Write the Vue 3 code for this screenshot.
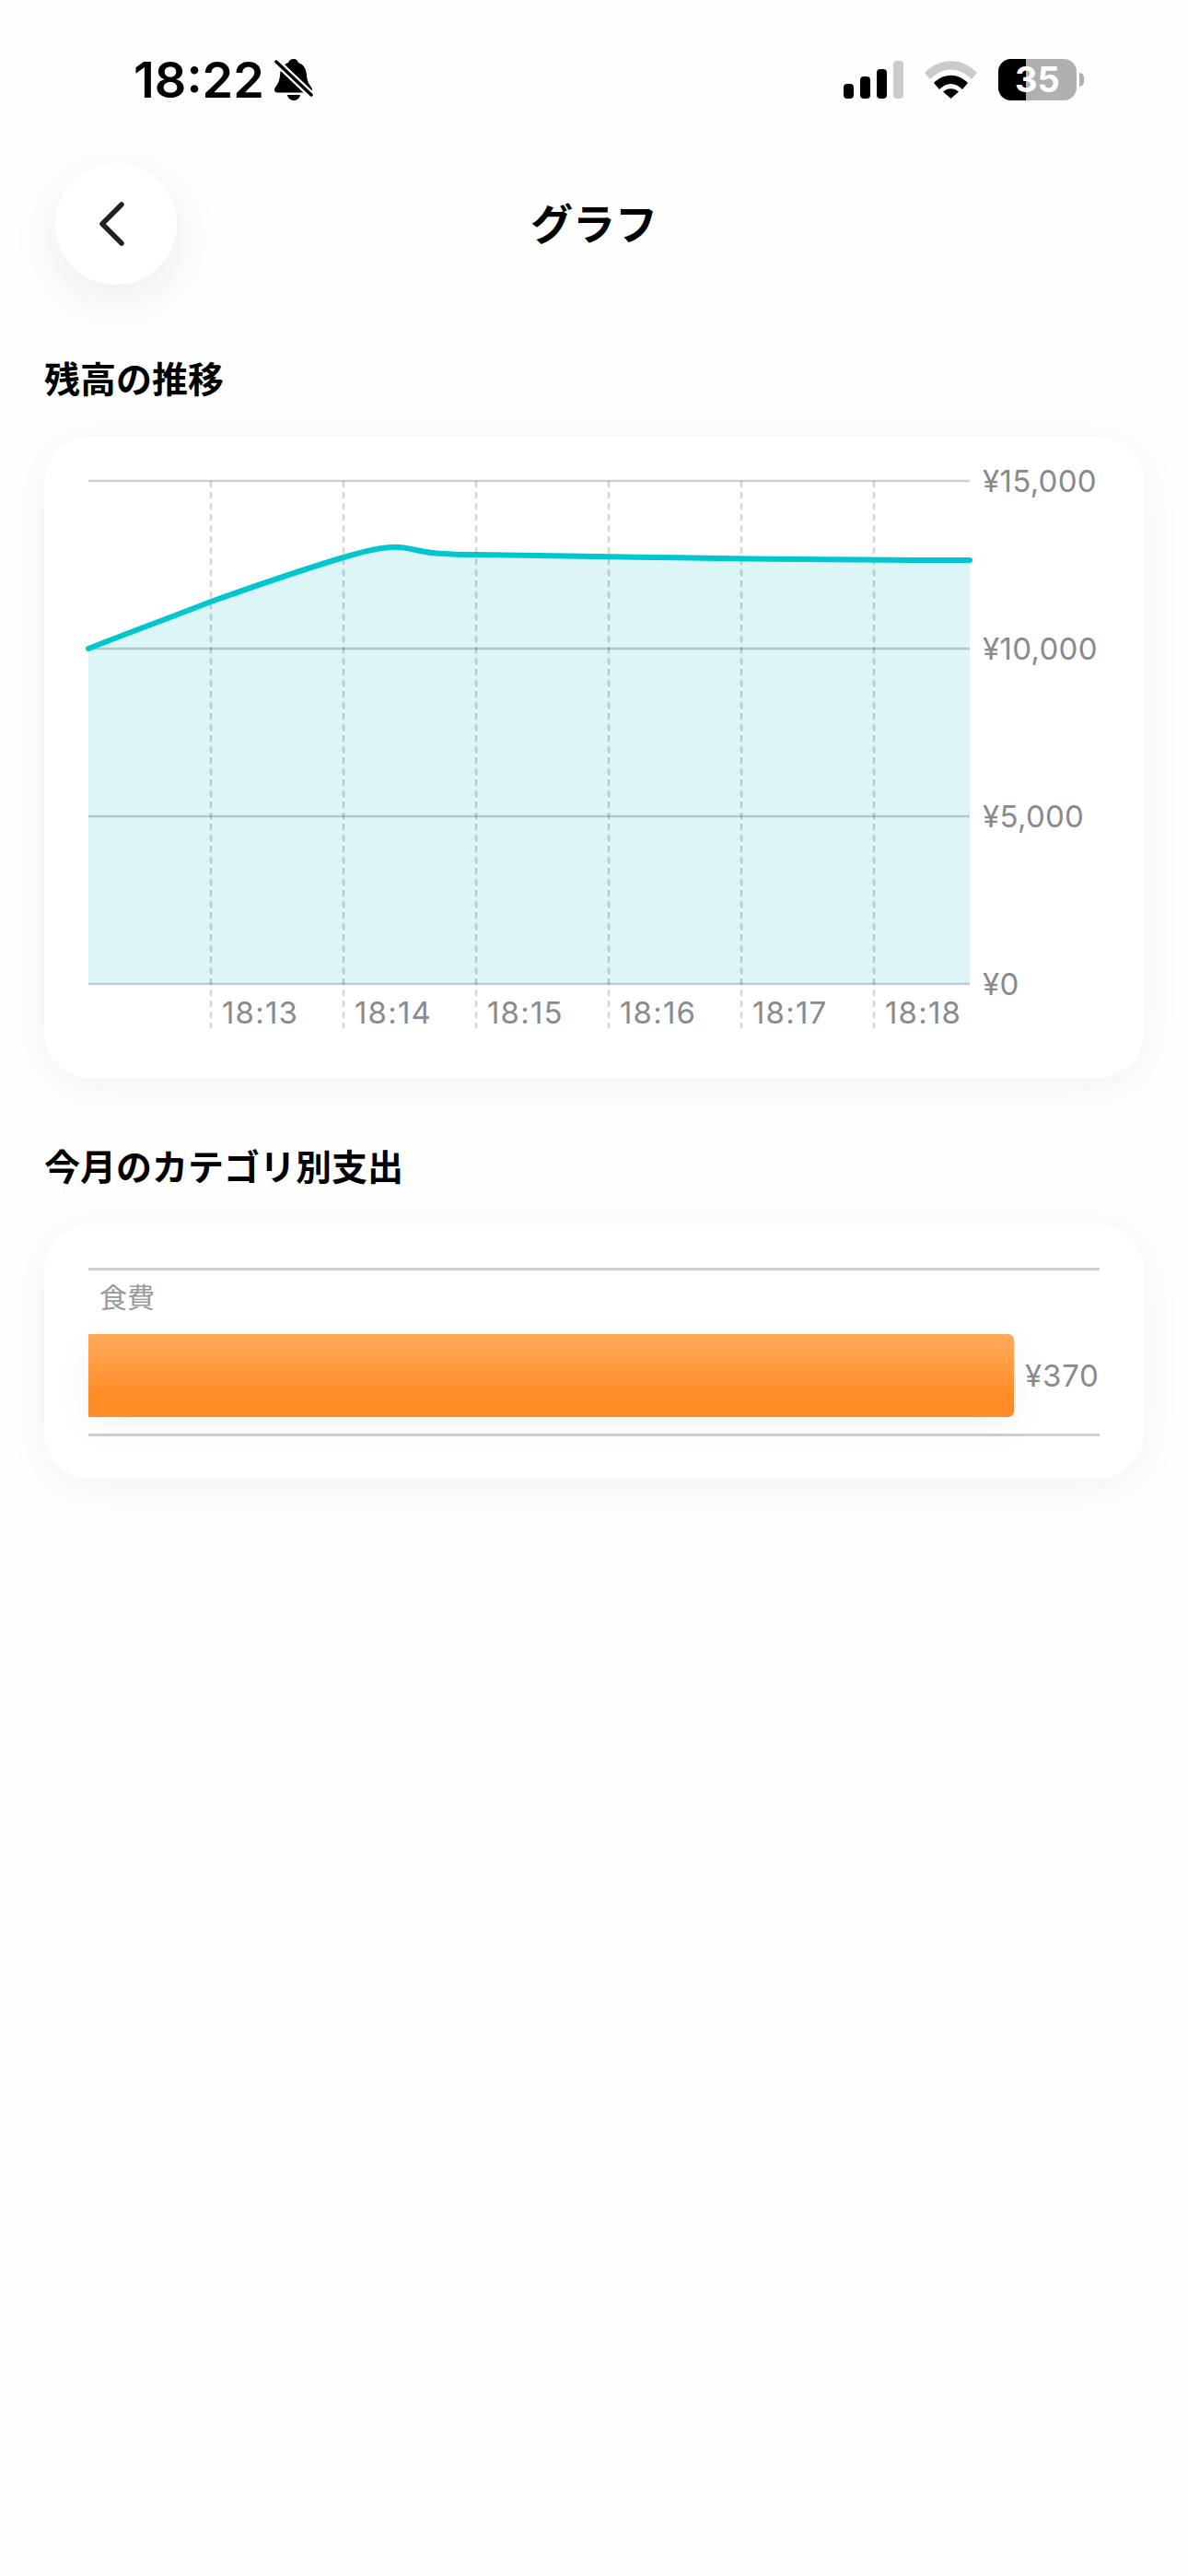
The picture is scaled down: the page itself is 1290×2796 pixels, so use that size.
<script setup>
const hLines = [
  { y: 48, label: '¥15,000' },
  { y: 230, label: '¥10,000' },
  { y: 412, label: '¥5,000' },
  { y: 594, label: '¥0' },
]
const vLines = [
  { x: 133, label: '18:13' },
  { x: 277, label: '18:14' },
  { x: 421, label: '18:15' },
  { x: 565, label: '18:16' },
  { x: 709, label: '18:17' },
  { x: 853, label: '18:18' },
]
const curve = 'M0 230 C45 212 90 196 133 179 C181 162 230 145 277 131 C300 124 318 119.700 334 119.700 C350 119.700 358 126 385 127 C400 128 410 128 421 128 C600 131 800 134 957 134'
const area = curve + ' L957 594 L0 594 Z'
</script>

<template>
  <div class="screen">
    <div class="status">
      <div class="status-left">
        <span class="time">18:22</span>
        <svg class="bell" width="42" height="46" viewBox="0 0 42 46">
          <path d="M21 0c2.600 0 4.400 1.800 4.800 4 5.600 1.600 8.400 6.200 9 12 .5 5 1 9 4 13 1.500 2 2.200 3.200 2.200 4.500 0 1.800-1.400 3-3.500 3H3.500C1.400 36.500 0 35.300 0 33.500c0-1.300 .7-2.500 2.200-4.500 3-4 3.500-8 4-13 .6-5.800 3.400-10.400 9-12 .4-2.200 2.200-4 5.800-4z" fill="#000" />
          <path d="M14 39h14c-.6 3.600-3.400 6-7 6s-6.400-2.400-7-6z" fill="#000" />
          <path d="M2 3 L40 39" stroke="#fefefe" stroke-width="8" />
          <path d="M2 3 L40 39" stroke="#000" stroke-width="3.500" stroke-linecap="round" />
        </svg>
      </div>
      <div class="status-right">
        <div class="signal">
          <i class="b1"></i><i class="b2"></i><i class="b3"></i><i class="b4"></i>
        </div>
        <svg class="wifi" width="57" height="41" viewBox="0 0 57 41">
          <path d="M0 13 C16 -4 41 -4 57 13 L51 20 C37 6 20 6 6 20 Z" fill="#cbcbcb" />
          <path d="M10 24 C21 13 36 13 47 24 L41 31 C33 23 24 23 16 31 Z" fill="#000" />
          <path d="M20 33.500 C25 29 32 29 37 33.500 L28.500 41 Z" fill="#000" />
        </svg>
        <div class="battery">
          <div class="battery-body">
            <div class="battery-fill"></div>
            <span class="battery-text">35</span>
          </div>
          <div class="battery-nub"></div>
        </div>
      </div>
    </div>

    <div class="nav">
      <button class="back">
        <svg width="32" height="50" viewBox="0 0 32 50">
          <path d="M27 4 L6 25 L27 46" fill="none" stroke="#222" stroke-width="5.500" stroke-linecap="round" stroke-linejoin="round" />
        </svg>
      </button>
      <div class="title">グラフ</div>
    </div>

    <div class="section balance">
      <h2 class="heading">残高の推移</h2>
      <div class="card line-card">
        <svg class="line-chart" viewBox="0 0 1146 644">
          <path :d="area" fill="#dcf5f7" />
          <line v-for="h in hLines" :key="h.y" x1="0" x2="957" :y1="h.y" :y2="h.y" stroke="#000" stroke-opacity="0.18" stroke-width="2.500" />
          <line v-for="v in vLines" :key="v.x" :x1="v.x" :x2="v.x" y1="48" y2="642" stroke="#000" stroke-opacity="0.17" stroke-width="2.500" stroke-dasharray="7 5" />
          <path :d="curve" fill="none" stroke="#00c6d0" stroke-width="6" stroke-linecap="round" />
          <text v-for="h in hLines" :key="h.label" x="971" :y="h.y + 12" class="axis">{{ h.label }}</text>
          <text v-for="v in vLines" :key="v.label" :x="v.x + 12" y="637" class="axis time-tick">{{ v.label }}</text>
        </svg>
      </div>
    </div>

    <div class="section category">
      <h2 class="heading">今月のカテゴリ別支出</h2>
      <div class="card bar-card">
        <div class="bar-chart">
          <div class="bar-label">食費</div>
          <div class="bar-row">
            <div class="bar"></div>
            <span class="bar-value">¥370</span>
          </div>
        </div>
      </div>
    </div>
  </div>
</template>

<style scoped>
.screen {
  width: 1290px;
  height: 2796px;
  background: #fefefe;
  overflow: hidden;
  font-family: Inter, "Noto Sans CJK JP", sans-serif;
  color: #000;
}

.status {
  height: 177px;
  display: flex;
  justify-content: space-between;
  align-items: flex-start;
  padding: 64px 113px 0 145px;
  box-sizing: border-box;
}
.status-left {
  display: flex;
  align-items: center;
  gap: 11px;
}
.time {
  font-size: 54px;
  font-weight: 600;
  line-height: 46px;
}
.bell {
  display: block;
}
.status-right {
  display: flex;
  align-items: flex-start;
  gap: 23px;
}
.signal {
  display: flex;
  align-items: flex-end;
  gap: 7px;
  height: 41px;
  margin-top: 2px;
}
.signal i {
  display: block;
  width: 11px;
  border-radius: 4px;
  background: #000;
}
.b1 { height: 16px; }
.b2 { height: 24px; }
.b3 { height: 32px; }
.signal .b4 { height: 41px; background: #cbcbcb; }
.wifi {
  display: block;
  margin-top: 2px;
}
.battery {
  display: flex;
  align-items: center;
  gap: 3px;
}
.battery-body {
  position: relative;
  width: 85px;
  height: 45px;
  border-radius: 14px;
  background: #b0b0b0;
  overflow: hidden;
}
.battery-fill {
  width: 30px;
  height: 100%;
  background: #000;
}
.battery-text {
  position: absolute;
  inset: 0;
  text-align: center;
  font-size: 38px;
  line-height: 45px;
  font-weight: 700;
  color: #fff;
}
.battery-nub {
  width: 5px;
  height: 15px;
  border-radius: 0 8px 8px 0;
  background: #b0b0b0;
}

.nav {
  position: relative;
  height: 132px;
  padding-left: 60px;
}
.back {
  width: 132px;
  height: 132px;
  border: none;
  border-radius: 50%;
  background: #fff;
  box-shadow: 0 16px 60px rgba(0, 0, 0, 0.07);
  display: flex;
  align-items: center;
  justify-content: center;
  padding: 0 10px 0 0;
}
.title {
  position: absolute;
  left: 0;
  right: 0;
  top: 0;
  text-align: center;
  font-size: 46px;
  line-height: 132px;
  font-weight: 700;
}

.section {
  padding: 0 48px;
}
.balance {
  margin-top: 79px;
}
.category {
  margin-top: 73px;
}
.heading {
  margin: 0 0 38px;
  font-size: 39px;
  line-height: 48px;
  font-weight: 700;
}
.card {
  background: #fff;
  border-radius: 50px;
  box-shadow: 0 8px 50px rgba(0, 0, 0, 0.05);
}
.line-card {
  height: 696px;
  padding: 0 48px;
  box-sizing: border-box;
}
.line-chart {
  display: block;
  overflow: visible;
  width: 1146px;
  height: 644px;
}
.axis {
  font-size: 33px;
  letter-spacing: 0.3px;
  fill: #8a8a8e;
}
.time-tick {
  letter-spacing: 1.2px;
}
.bar-card {
  height: 276px;
  padding: 47px 48px 0;
  box-sizing: border-box;
}
.bar-chart {
  height: 183px;
  border-top: 3px solid #d0d0d0;
  border-bottom: 3px solid #d0d0d0;
  box-sizing: border-box;
}
.bar-label {
  margin: 11px 0 0 12px;
  font-size: 30px;
  line-height: 36px;
  color: #999;
}
.bar-row {
  display: flex;
  align-items: center;
  gap: 12px;
  margin-top: 22px;
}
.bar {
  width: 1005px;
  height: 90px;
  border-radius: 0 6px 6px 0;
  background: linear-gradient(180deg, #ffab5c 0%, #ff8c26 75%);
  box-shadow: 0 10px 40px rgba(0, 0, 0, 0.05);
}
.bar-value {
  font-size: 33px;
  letter-spacing: 0.8px;
  color: #8a8a8e;
}
</style>

<style>
body {
  background: #fefefe;
}
</style>
